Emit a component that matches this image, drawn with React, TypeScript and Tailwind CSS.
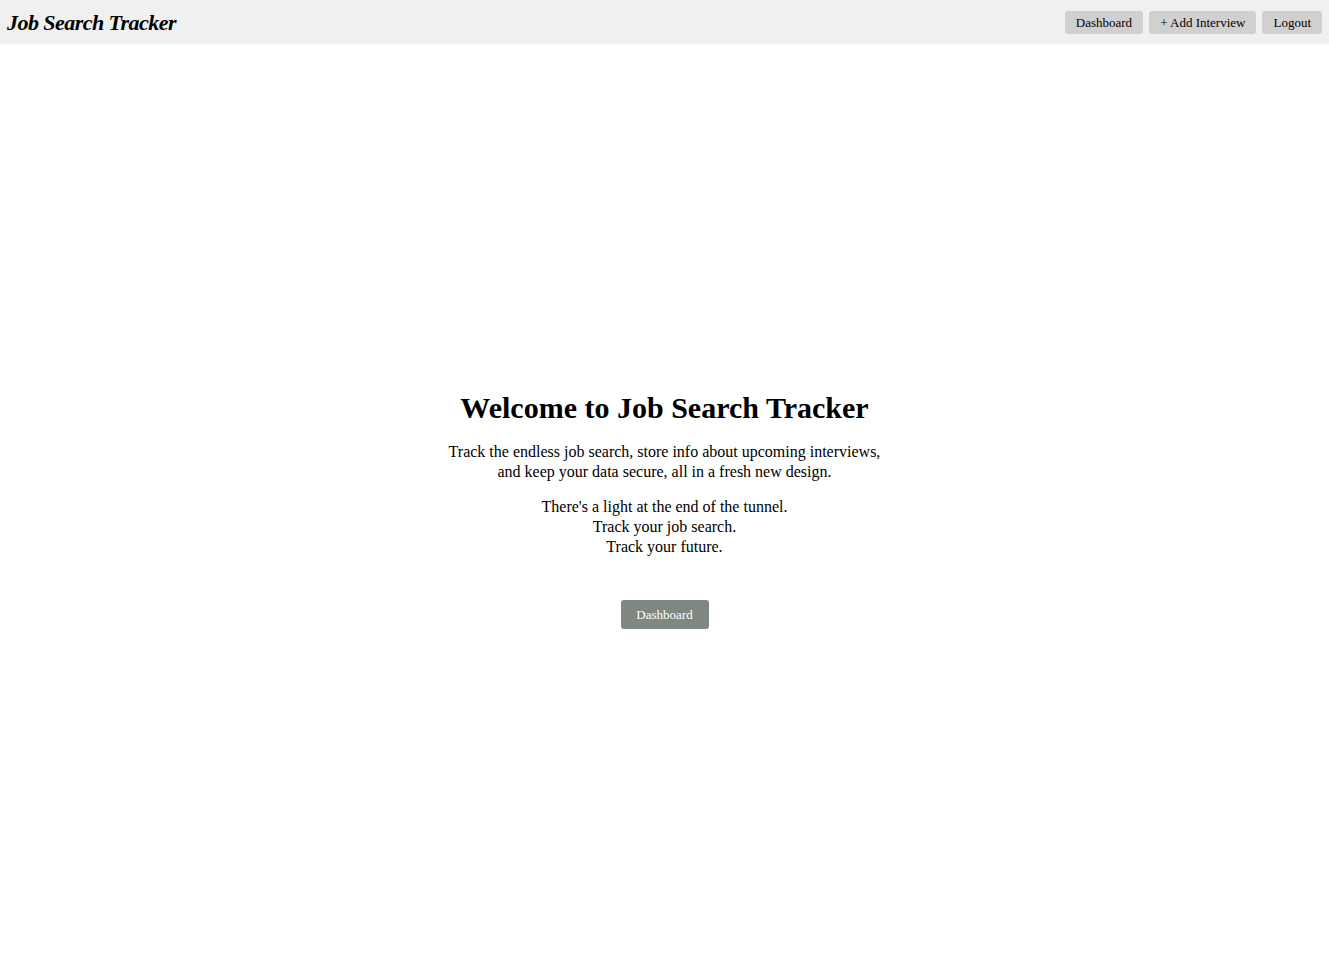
import React from 'react';

const serif = { fontFamily: '"Liberation Serif", "DejaVu Serif", serif' };

const NavButton: React.FC<{ label: string }> = ({ label }) => (
    <button className="h-[23px] px-[11px] rounded-[3px] bg-[#d0d0d0] text-[13px] text-black leading-none">
        {label}
    </button>
);

const App: React.FC = () => {
    return (
        <div className="min-h-screen flex flex-col bg-white text-black" style={serif}>
            <nav className="h-[44px] bg-[#f0f0f0] flex items-center justify-between pl-[7px] pr-[7px]">
                <h1 className="text-[22px] font-bold italic tracking-tight pt-[1px]">Job Search Tracker</h1>
                <div className="flex items-center gap-[6px]">
                    <NavButton label="Dashboard" />
                    <NavButton label="+ Add Interview" />
                    <NavButton label="Logout" />
                </div>
            </nav>

            <main className="flex-1 flex flex-col items-center justify-center text-center pt-[16px]">
                <h2 className="text-[30px] font-bold leading-tight">Welcome to Job Search Tracker</h2>
                <p className="mt-[15px] text-[16px] leading-[20px]">
                    Track the endless job search, store info about upcoming interviews,
                    <br />
                    and keep your data secure, all in a fresh new design.
                </p>
                <p className="mt-[15px] text-[16px] leading-[20px]">
                    There's a light at the end of the tunnel.
                    <br />
                    Track your job search.
                    <br />
                    Track your future.
                </p>
                <button className="mt-[43px] h-[29px] w-[88px] rounded-[3px] bg-[#7f8780] text-white text-[13px]">
                    Dashboard
                </button>
            </main>
        </div>
    );
};

export default App;
